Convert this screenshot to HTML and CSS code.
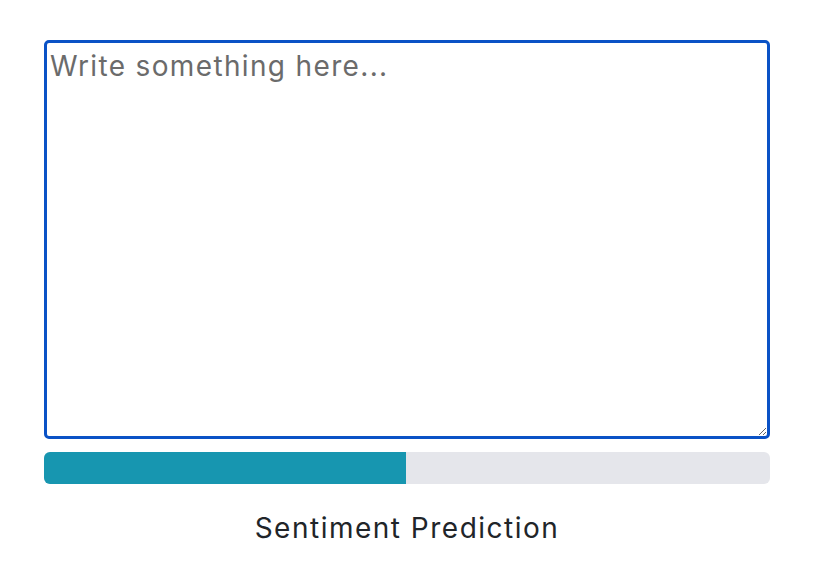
FILE: index.html
```html
<!DOCTYPE html>
<html>
<head>
<meta charset="utf-8">
<link rel="stylesheet" href="styles.css">
</head>
<body>
<main class="app">
  <textarea class="input" placeholder="Write something here..."></textarea>
  <div class="progress"><div class="progress-fill" style="width: 49.9%"></div></div>
  <p class="label">Sentiment Prediction</p>
</main>
</body>
</html>
```
FILE: styles.css
```css
html, body {
  margin: 0;
  padding: 0;
  background: #ffffff;
}
.app {
  display: flex;
  flex-direction: column;
  padding: 40px 44px 0;
  font-family: Inter, "Liberation Sans", Arial, sans-serif;
}
.input {
  box-sizing: border-box;
  width: 100%;
  height: 399px;
  margin: 0;
  padding: 6px 3px;
  border: 3px solid #0a52c6;
  border-radius: 5px;
  outline: none;
  font-family: Inter, "Liberation Sans", Arial, sans-serif;
  font-size: 28px;
  line-height: 34px;
  letter-spacing: 1.35px;
  color: #212529;
  resize: both;
}
.input::placeholder {
  color: #6b6b6b;
  opacity: 1;
}
.progress {
  margin-top: 13px;
  height: 32px;
  border-radius: 6px;
  background: #e5e6eb;
  overflow: hidden;
  display: flex;
}
.progress-fill {
  height: 100%;
  background: #1796b0;
}
.label {
  margin: 27px 0 0;
  text-align: center;
  font-size: 28px;
  line-height: 34px;
  letter-spacing: 1.5px;
  color: #212529;
}
```
